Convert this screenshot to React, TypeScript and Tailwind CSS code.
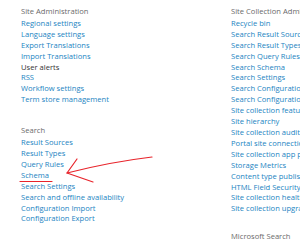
const siteAdmin = [
  "Regional settings",
  "Language settings",
  "Export Translations",
  "Import Translations",
  "User alerts",
  "RSS",
  "Workflow settings",
  "Term store management",
];

const search = [
  "Result Sources",
  "Result Types",
  "Query Rules",
  "Schema",
  "Search Settings",
  "Search and offline availability",
  "Configuration Import",
  "Configuration Export",
];

const siteCollection = [
  "Recycle bin",
  "Search Result Sources",
  "Search Result Types",
  "Search Query Rules",
  "Search Schema",
  "Search Settings",
  "Search Configuration Import",
  "Search Configuration Export",
  "Site collection features",
  "Site hierarchy",
  "Site collection audit settings",
  "Portal site connection",
  "Site collection app permissions",
  "Storage Metrics",
  "Content type publishing",
  "HTML Field Security",
  "Site collection health checks",
  "Site collection upgrade",
];

function Section({ title, links, className = "" }: { title: string; links: string[]; className?: string }) {
  return (
    <div className={className}>
      <h3 className="text-[#6a6a6a] mb-[1px]">{title}</h3>
      <ul>
        {links.map((l) => (
          <li key={l} className={l === "User alerts" ? "text-[#333]" : "text-[#1b84c2]"}>
            {l}
          </li>
        ))}
      </ul>
    </div>
  );
}

export default function App() {
  return (
    <div className="relative w-[300px] h-[245px] overflow-hidden bg-white whitespace-nowrap text-[7.6px] leading-[10.9px] font-['Open_Sans','Noto_Sans',sans-serif]">
      <div className="flex pt-[6px]">
        <div className="w-[231px] shrink-0 pl-[21px]">
          <Section title="Site Administration" links={siteAdmin} />
          <Section title="Search" links={search} className="mt-[20px]" />
        </div>
        <div className="shrink-0">
          <Section title="Site Collection Administration" links={siteCollection} />
          <Section title="Microsoft Search" links={[]} className="mt-[17px]" />
        </div>
      </div>

      {/* red annotation */}
      <svg className="absolute inset-0 pointer-events-none" width="300" height="245" viewBox="0 0 300 245" fill="none">
        <path d="M20 181.5 L52 181.5" stroke="#e8232a" strokeWidth="1.2" strokeLinecap="round" />
        <path d="M152 157 Q110 162 67 173" stroke="#e8232a" strokeWidth="1.2" strokeLinecap="round" />
        <path d="M77 159 L67 173 L93 182" stroke="#e8232a" strokeWidth="1.2" strokeLinecap="round" strokeLinejoin="round" />
      </svg>
    </div>
  );
}
